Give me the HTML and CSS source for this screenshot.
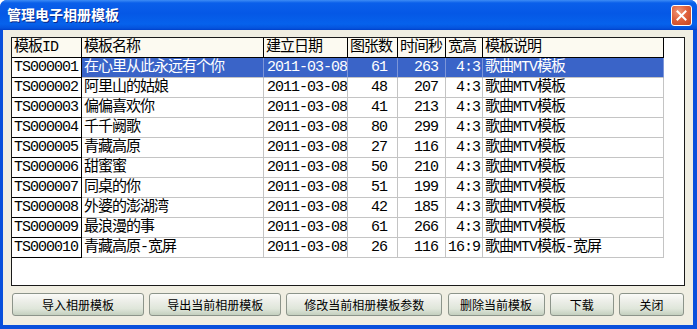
FILE: index.html
```html
<!DOCTYPE html>
<html lang="zh-CN">
<head>
    <meta charset="UTF-8">
    <title>管理电子相册模板</title>
    <link rel="stylesheet" href="styles.css">
</head>
<body>
    <div class="window">
        <div class="title-bar">
            <span class="title">管理电子相册模板</span>
            <button class="close-btn" title="关闭">
                <svg width="11" height="11" viewBox="0 0 11 11">
                    <path d="M1.5 1.5 L9.5 9.5 M9.5 1.5 L1.5 9.5" stroke="#fff" stroke-width="2" stroke-linecap="square"/>
                </svg>
            </button>
        </div>

        <div class="client">
            <div class="grid-box">
                <table class="grid">
                    <colgroup>
                        <col style="width:70px">
                        <col style="width:182px">
                        <col style="width:84px">
                        <col style="width:50px">
                        <col style="width:48px">
                        <col style="width:37px">
                        <col style="width:181px">
                    </colgroup>
                    <thead>
                        <tr>
                            <th>模板ID</th>
                            <th>模板名称</th>
                            <th>建立日期</th>
                            <th>图张数</th>
                            <th>时间秒</th>
                            <th>宽高</th>
                            <th>模板说明</th>
                        </tr>
                    </thead>
                    <tbody id="rows"></tbody>
                </table>
            </div>

            <div class="button-row">
                <button class="btn btn-import">导入相册模板</button>
                <button class="btn btn-export">导出当前相册模板</button>
                <button class="btn btn-edit">修改当前相册模板参数</button>
                <button class="btn btn-delete">删除当前模板</button>
                <button class="btn btn-download">下载</button>
                <button class="btn btn-close">关闭</button>
            </div>
        </div>
    </div>

    <script>
        document.addEventListener('DOMContentLoaded', function() {
            const templates = [
                ['TS000001', '在心里从此永远有个你', '2011-03-08', 61, 263, '4:3', '歌曲MTV模板'],
                ['TS000002', '阿里山的姑娘', '2011-03-08', 48, 207, '4:3', '歌曲MTV模板'],
                ['TS000003', '偏偏喜欢你', '2011-03-08', 41, 213, '4:3', '歌曲MTV模板'],
                ['TS000004', '千千阙歌', '2011-03-08', 80, 299, '4:3', '歌曲MTV模板'],
                ['TS000005', '青藏高原', '2011-03-08', 27, 116, '4:3', '歌曲MTV模板'],
                ['TS000006', '甜蜜蜜', '2011-03-08', 50, 210, '4:3', '歌曲MTV模板'],
                ['TS000007', '同桌的你', '2011-03-08', 51, 199, '4:3', '歌曲MTV模板'],
                ['TS000008', '外婆的澎湖湾', '2011-03-08', 42, 185, '4:3', '歌曲MTV模板'],
                ['TS000009', '最浪漫的事', '2011-03-08', 61, 266, '4:3', '歌曲MTV模板'],
                ['TS000010', '青藏高原-宽屏', '2011-03-08', 26, 116, '16:9', '歌曲MTV模板-宽屏']
            ];
            const classes = ['id', 'name', 'date', 'pics', 'secs', 'ratio', 'desc'];
            const tbody = document.getElementById('rows');

            templates.forEach((row, index) => {
                const tr = document.createElement('tr');
                // первая строка выделена
                if (index === 0) tr.className = 'selected';
                row.forEach((value, i) => {
                    const td = document.createElement('td');
                    td.className = classes[i];
                    td.textContent = value;
                    tr.appendChild(td);
                });
                tbody.appendChild(tr);
            });
        });
    </script>
</body>
</html>
```

FILE: styles.css
```css
body {
    margin: 0;
    padding: 0;
    width: 697px;
    height: 329px;
    overflow: hidden;
    background-color: #ffffff;
}
.window {
    display: flex;
    flex-direction: column;
    width: 697px;
    height: 329px;
    box-sizing: border-box;
    background: #0a50dc;
    border-radius: 7px 7px 0 0;
    overflow: hidden;
}
.title-bar {
    height: 30px;
    flex-shrink: 0;
    display: flex;
    align-items: center;
    padding: 0 5px 0 7px;
    background: linear-gradient(to bottom, #3d8cf5 0%, #0a5fea 10%, #0558e6 45%, #0662ec 80%, #0553dd 94%, #0040c8 100%);
}
.title {
    color: #ffffff;
    font-family: "Noto Sans CJK SC", sans-serif;
    font-weight: bold;
    font-size: 14px;
    text-shadow: 1px 1px 0 #0a2a8a;
    margin-top: -2px;
}
.close-btn {
    margin-left: auto;
    width: 21px;
    height: 21px;
    padding: 0;
    border: 1px solid #ffffff;
    border-radius: 3px;
    background: radial-gradient(circle at 35% 30%, #f0987a 0%, #e0623d 45%, #c64320 100%);
    display: flex;
    align-items: center;
    justify-content: center;
    margin-top: 1px;
}
.client {
    flex: 1;
    margin: 0 4px 4px 3px;
    background-color: #f0eee2;
    padding: 7px 8px 0 8px;
    display: flex;
    flex-direction: column;
}
.grid-box {
    height: 249px;
    width: 674px;
    box-sizing: border-box;
    border: 1px solid #1a1a1a;
    background-color: #ffffff;
    overflow: hidden;
}
.grid {
    table-layout: fixed;
    border-collapse: separate;
    border-spacing: 0;
    width: 652px;
    font-family: "Liberation Mono", "Noto Sans CJK SC", monospace;
    font-size: 15px;
    letter-spacing: -1px;
    color: #000000;
}
.grid th,
.grid td {
    height: 19px;
    padding: 0 0 0 2px;
    line-height: 19px;
    white-space: nowrap;
    overflow: hidden;
    text-align: left;
    font-weight: normal;
    border-right: 1px solid #c4c4c4;
    border-bottom: 1px solid #c4c4c4;
}
.grid th {
    background-color: #fcfaf1;
    border-right-color: #000000;
    border-bottom-color: #000000;
}
.grid td.id {
    background-color: #ffffff;
    border-right-color: #000000;
    border-bottom-color: #000000;
}
.grid td.date {
    padding-left: 3px;
}
.grid td.pics {
    text-align: right;
    padding-right: 10px;
}
.grid td.secs {
    text-align: right;
    padding-right: 7px;
}
.grid td.ratio {
    text-align: right;
    padding-right: 2px;
    padding-left: 0;
}
.grid tr.selected td {
    background-color: #3a64c8;
    color: #ffffff;
    border-right-color: #7d96d8;
}
.grid tr.selected td.id {
    background-color: #ffffff;
    color: #000000;
    border-right-color: #000000;
}
.button-row {
    display: flex;
    justify-content: space-between;
    margin-top: 7px;
    padding-left: 1px;
    width: 672px;
}
.btn {
    height: 23px;
    padding: 0;
    border: 1px solid #8c948a;
    border-radius: 3px;
    background: linear-gradient(to bottom, #fbfbf8 0%, #eceee8 35%, #dfe6da 70%, #c4d0bf 100%);
    font-family: "Noto Sans CJK SC", sans-serif;
    font-size: 12px;
    color: #000000;
    line-height: 20px;
    cursor: pointer;
}
.btn:hover {
    border-color: #e8a33a;
}
.btn-import { width: 132px; }
.btn-export { width: 132px; }
.btn-edit { width: 156px; }
.btn-delete { width: 97px; }
.btn-download { width: 64px; }
.btn-close { width: 65px; }
```
